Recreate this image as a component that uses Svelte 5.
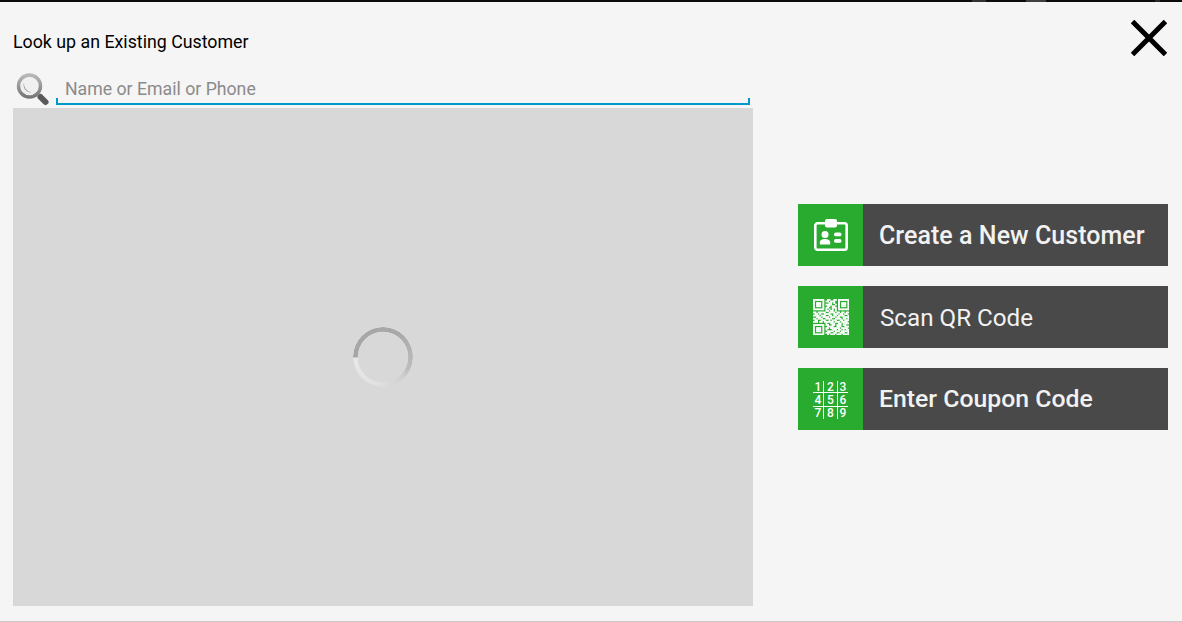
<script>
  // QR-ish matrix, drawn as white cells
  const qrRows = [
    "11111110011001101111111",
    "10000010110111001000001",
    "10111010001101001011101",
    "10111010111100101011101",
    "10111010011011001011101",
    "10000010110011101000001",
    "11111110101010101111111",
    "00000000110110100000000",
    "11011111001111011011011",
    "01101001111001110110110",
    "11110111001101101111001",
    "00111011110111011001111",
    "11011100111100111101101",
    "01100111001011100110111",
    "11101101111110111011110",
    "00000000100111001101111",
    "11111110110011011101100",
    "10000010011110011100111",
    "10111010110111111011110",
    "10111010100011101101011",
    "10111010011110111011111",
    "10000010111001100111001",
    "11111110010111011101111"
  ];
  const qrCells = [];
  qrRows.forEach((row, y) => {
    [...row].forEach((c, x) => {
      if (c === "1") qrCells.push({ x, y });
    });
  });
  const digits = [1, 2, 3, 4, 5, 6, 7, 8, 9];
</script>

<div class="screen">
  <div class="panel">
    <section class="left">
      <h1 class="title">Look up an Existing Customer</h1>
      <div class="search-row">
        <svg class="search-icon" width="34" height="36" viewBox="0 0 34 36" aria-hidden="true">
          <defs>
            <linearGradient id="ring" x1="0" y1="0" x2="0" y2="1">
              <stop offset="0" stop-color="#b8b8b8" />
              <stop offset="1" stop-color="#777" />
            </linearGradient>
          </defs>
          <circle cx="13.5" cy="14" r="11" fill="#f0f0f0" stroke="url(#ring)" stroke-width="3.4" />
          <path d="M8 10.5 a7.5 7.5 0 0 0 7.5 10 a9 9 0 0 1 -7.5 -10z" fill="#9a9a9a" />
          <path d="M24.5 25 L29.5 30" stroke="#5a5a5a" stroke-width="6" stroke-linecap="round" />
        </svg>
        <div class="field">
          <input class="input" type="text" placeholder="Name or Email or Phone" />
        </div>
      </div>
      <div class="results">
        <div class="spinner"></div>
      </div>
    </section>

    <section class="right">
      <button class="close" aria-label="Close">
        <svg width="36" height="36" viewBox="0 0 36 36">
          <path d="M1.5 1.5 L34.5 34.5 M34.5 1.5 L1.5 34.5" stroke="#000" stroke-width="5" fill="none" />
        </svg>
      </button>
      <div class="actions">
        <button class="action">
          <span class="action-icon">
            <svg class="card" width="34" height="32" viewBox="0 0 34 32" aria-hidden="true">
              <rect x="1.3" y="4.3" width="31.4" height="26.4" rx="2.2" fill="none" stroke="#fff" stroke-width="2.6" />
              <rect x="11" y="0" width="12" height="8.5" rx="2" fill="#fff" />
              <circle cx="11" cy="15.5" r="3.5" fill="#fff" />
              <path d="M5.8 25.5 v-2 q0 -3.6 5.2 -3.6 q5.2 0 5.2 3.6 v2z" fill="#fff" />
              <rect x="20" y="13.5" width="7.5" height="3.8" rx="1.9" fill="#fff" />
              <rect x="20" y="20" width="7.5" height="3.8" rx="1.9" fill="#fff" />
            </svg>
          </span>
          <span class="action-label medium">Create a New Customer</span>
        </button>
        <button class="action">
          <span class="action-icon">
            <svg class="qr" width="36" height="36" viewBox="0 0 23 23" aria-hidden="true">
              {#each qrCells as cell}
                <rect x={cell.x} y={cell.y} width="1.2" height="1.2" fill="#fff" />
              {/each}
            </svg>
          </span>
          <span class="action-label regular">Scan QR Code</span>
        </button>
        <button class="action">
          <span class="action-icon">
            <span class="keypad">
              {#each digits as d}
                <span class="key">{d}</span>
              {/each}
            </span>
          </span>
          <span class="action-label coupon">Enter Coupon Code</span>
        </button>
      </div>
    </section>
  </div>
</div>

<style>
  :global(body) {
    margin: 0;
    background: #000;
  }

  .screen {
    width: 1182px;
    height: 622px;
    padding-top: 2px;
    box-sizing: border-box;
    overflow: hidden;
    font-family: Roboto, sans-serif;
    /* what shows through above the panel */
    background: linear-gradient(90deg,
      #0c0c0c 972px, #333 972px, #333 986px, #0c0c0c 986px,
      #0c0c0c 1026px, #404040 1026px, #404040 1046px, #0c0c0c 1046px,
      #0c0c0c 1155px, #2a2a2a 1155px, #2a2a2a 1160px, #0c0c0c 1160px);
  }

  .panel {
    display: flex;
    height: 619px;
    background: #f5f5f5;
    border-bottom: 1px solid #c8c8c8;
    box-sizing: content-box;
  }

  .left {
    width: 740px;
    margin-left: 13px;
    display: flex;
    flex-direction: column;
  }

  .title {
    margin: 30px 0 0;
    height: 20px;
    font-size: 17.8px;
    line-height: 20px;
    font-weight: 400;
    color: #000;
  }

  .search-row {
    display: flex;
    align-items: flex-start;
    height: 56px;
  }

  .search-icon {
    margin: 20px 0 0 3px;
    flex: none;
  }

  .field {
    margin: 24px 0 0 6px;
    width: 694px;
    height: 29px;
    box-sizing: border-box;
    position: relative;
    border-bottom: 2px solid #0099cc;
  }

  /* small end tick of the underline, both sides */
  .field::before,
  .field::after {
    content: "";
    position: absolute;
    bottom: 0;
    width: 2px;
    height: 5px;
    background: #0099cc;
  }
  .field::before { left: 0; }
  .field::after { right: 0; }

  .input {
    display: block;
    width: 100%;
    height: 25px;
    padding: 0 0 0 9px;
    border: none;
    outline: none;
    background: transparent;
    box-sizing: border-box;
    font-family: Roboto, sans-serif;
    font-size: 17.7px;
    color: #333;
  }
  .input::placeholder {
    color: #8b8b8b;
    opacity: 1;
  }

  .results {
    width: 740px;
    height: 498px;
    background: #d8d8d8;
    display: flex;
    align-items: center;
    justify-content: center;
  }

  .spinner {
    width: 60px;
    height: 60px;
    border-radius: 50%;
    background: conic-gradient(from 270deg,
      #a6a6a6 0deg, #a8a8a8 120deg, #bdbdbd 205deg, #cfcfcf 225deg,
      #e0e0e0 280deg, #e8e8e8 358deg, #a6a6a6 360deg);
    -webkit-mask: radial-gradient(circle closest-side, transparent 25px, #000 25.6px, #000 29.6px, transparent 30px);
    mask: radial-gradient(circle closest-side, transparent 25px, #000 25.6px, #000 29.6px, transparent 30px);
  }

  .right {
    flex: 1;
    position: relative;
    padding-left: 45px;
    padding-top: 202px;
  }

  .close {
    position: absolute;
    top: 18px;
    right: 15px;
    width: 36px;
    height: 36px;
    padding: 0;
    border: none;
    background: transparent;
  }

  .actions {
    display: flex;
    flex-direction: column;
    gap: 20px;
    width: 370px;
  }

  .action {
    display: flex;
    height: 62px;
    padding: 0;
    border: none;
    background: #494949;
    color: #f2f2f2;
    font-family: Roboto, sans-serif;
    text-align: left;
  }

  .action-icon {
    width: 65px;
    height: 100%;
    flex: none;
    background: #29ab30;
    display: flex;
    align-items: center;
    justify-content: center;
  }

  .action-label {
    align-self: center;
    padding-left: 16px;
    white-space: nowrap;
  }
  .medium {
    font-size: 25px;
    font-weight: 500;
    letter-spacing: 0.05px;
  }
  .coupon {
    font-size: 24.8px;
    font-weight: 500;
    padding-bottom: 1px;
  }
  .regular {
    padding-left: 17px;
    padding-top: 2px;
    font-size: 24.2px;
    font-weight: 400;
  }

  .keypad {
    display: grid;
    grid-template-columns: 11px 14px 10px;
    grid-template-rows: 12px 14px 12px;
    width: 35px;
    height: 38px;
    margin-top: 2px;
  }
  .key {
    display: flex;
    align-items: center;
    justify-content: center;
    box-sizing: border-box;
    font-size: 12px;
    line-height: 1;
    font-weight: 500;
    color: #fff;
    border-right: 1px solid #fff;
    border-bottom: 1px solid #fff;
  }
  .key:nth-child(3n) { border-right: none; }
  .key:nth-child(n + 7) { border-bottom: none; }
</style>
